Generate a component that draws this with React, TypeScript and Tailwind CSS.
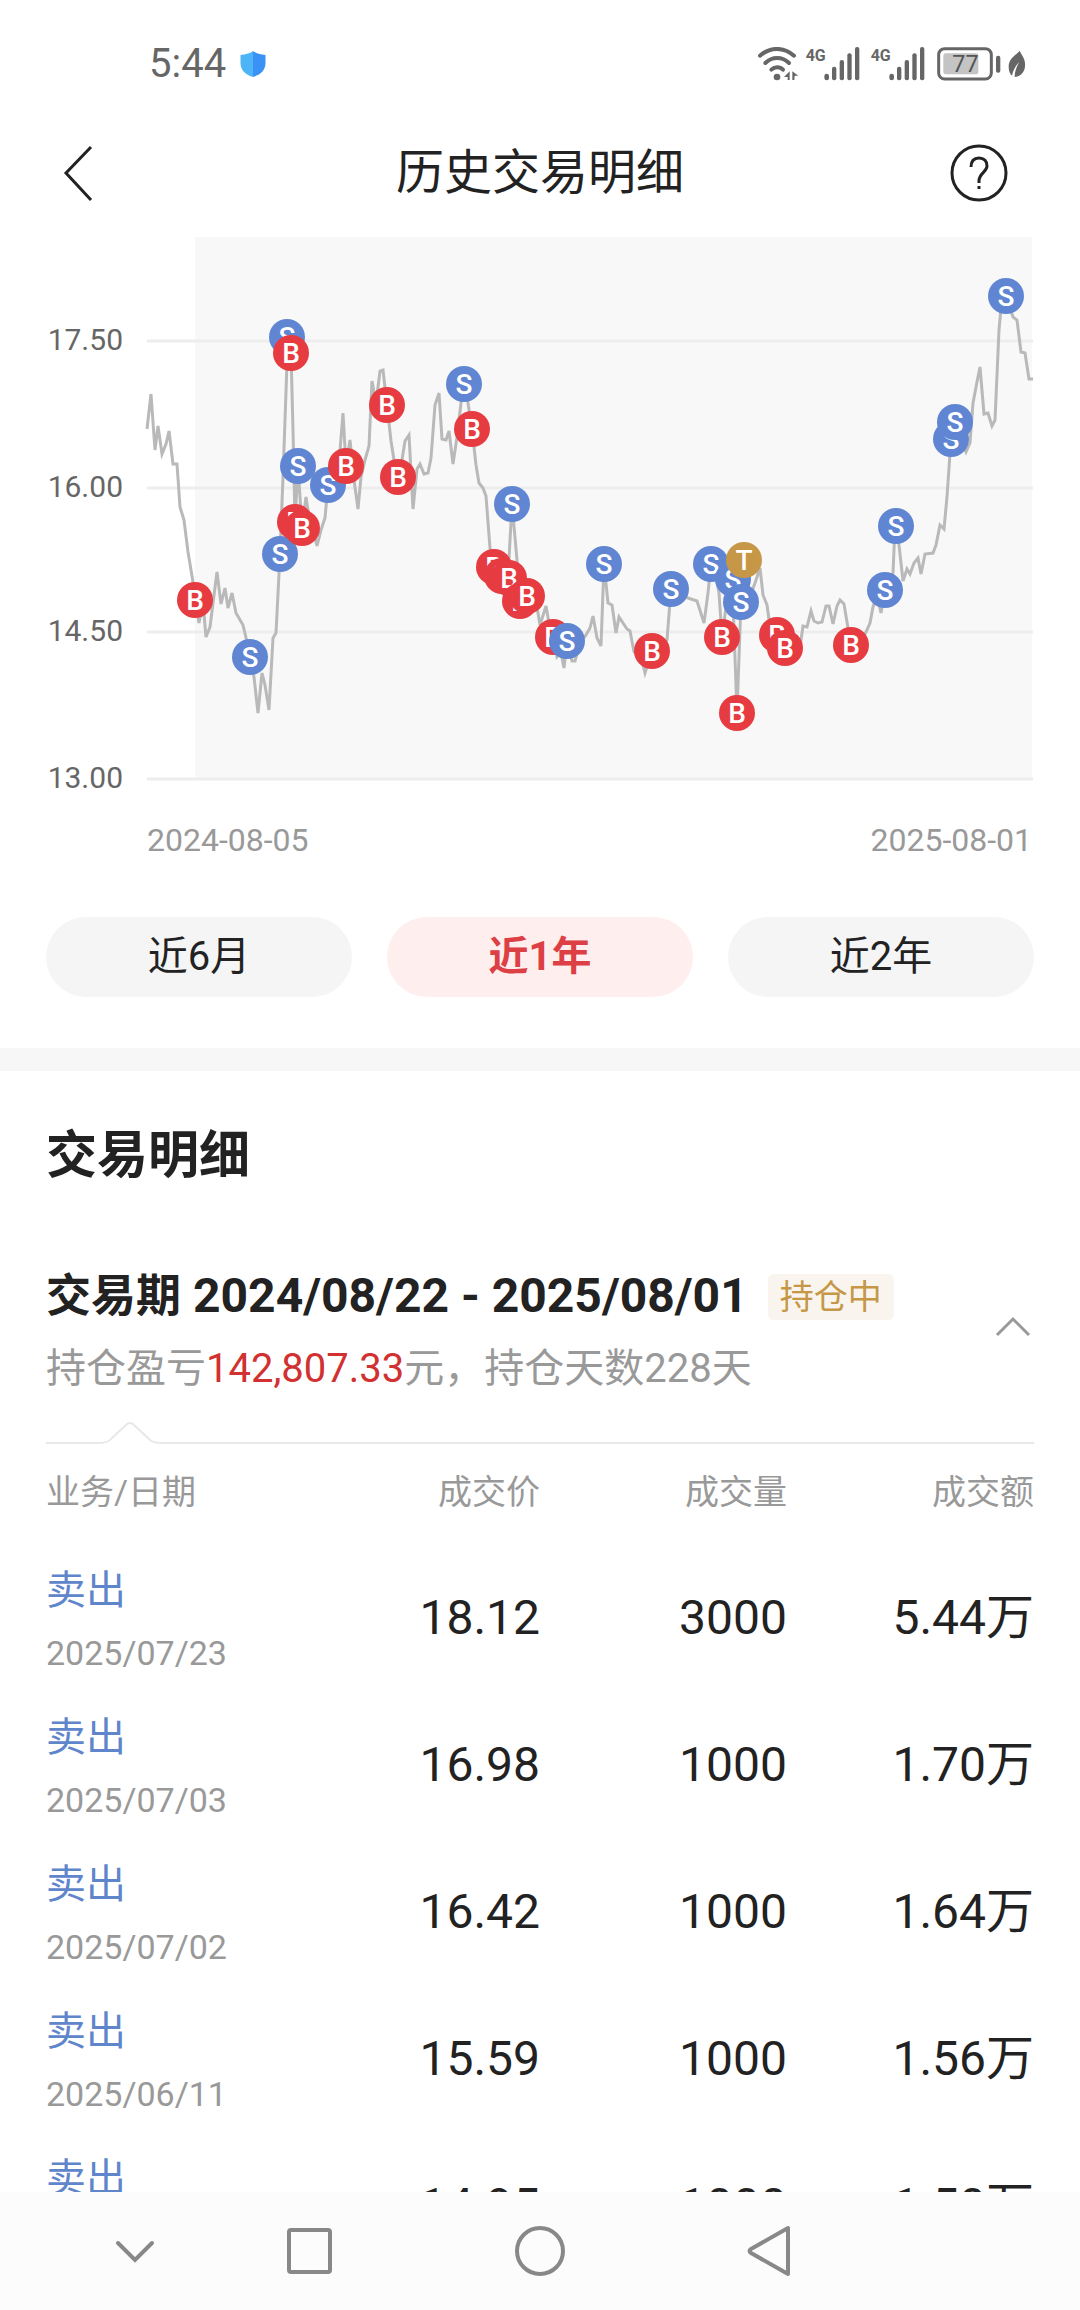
import { useState } from "react";

type MarkerType = "B" | "S" | "T";

interface Trade {
  date: string;
  side: string;
  price: string;
  volume: string;
  amount: string;
}

const trades: Trade[] = [
  { date: "2025/07/23", side: "卖出", price: "18.12", volume: "3000", amount: "5.44万" },
  { date: "2025/07/03", side: "卖出", price: "16.98", volume: "1000", amount: "1.70万" },
  { date: "2025/07/02", side: "卖出", price: "16.42", volume: "1000", amount: "1.64万" },
  { date: "2025/06/11", side: "卖出", price: "15.59", volume: "1000", amount: "1.56万" },
  { date: "2025/06/09", side: "卖出", price: "14.95", volume: "1000", amount: "1.50万" },
];

const ranges = ["近6月", "近1年", "近2年"];

const gridLines = [
  { label: "17.50", y: 111 },
  { label: "16.00", y: 258 },
  { label: "14.50", y: 402 },
  { label: "13.00", y: 549 },
];

const pricePoints = `147,199 151,164 155,220 158,196 162,224 166,214 169,201 173,234 177,234 180,277
184,290 188,322 193,352 195,370 199,393 203,373 206,407 210,397 213,373 217,342 221,374 225,358
228,378 232,363 236,383 243,395 247,412 250,427 254,447 258,483 262,443 265,455 269,480 273,408
276,403 280,324 283,247 287,133 288,107 291,123 293,200 295,292 298,236 302,298 306,267 309,287
313,300 317,316 321,300 325,288 328,255 335,248 339,233 343,183 346,236 350,210 354,250 358,279
361,247 365,230 369,216 372,151 376,173 380,141 383,140 387,175 391,211 394,230 398,247 402,230
405,211 409,205 413,279 417,239 420,234 424,244 428,243 431,228 435,175 439,163 442,209 446,210
449,201 453,234 457,207 461,173 464,154 468,173 472,199 476,235 479,253 483,258 486,266 490,318
494,337 502,345 508,347 512,274 517,330 520,371 527,366 537,377 540,395 546,376 549,393 553,407
557,427 561,423 564,438 567,411 572,431 575,431 580,413 586,405 590,398 593,386 597,408 601,416
604,334 608,373 612,375 616,403 619,387 627,399 630,401 634,422 641,427 645,443 652,421 667,410
671,359 688,368 697,371 704,393 708,363 711,334 715,340 719,363 722,407 726,377 730,347 733,372
737,483 741,372 744,330 750,367 755,353 760,338 763,365 767,375 770,397 777,405 785,418 800,417
803,396 807,397 811,381 814,391 818,393 822,392 826,376 829,376 833,394 837,376 840,370 844,374
848,398 851,415 860,413 866,402 870,393 873,377 877,365 881,383 885,360 893,343 895,296 899,315
903,351 907,339 910,344 914,333 918,328 921,344 925,324 933,323 936,315 940,295 944,299 947,267
951,209 954,192 966,222 970,213 973,173 977,152 980,137 984,184 988,183 992,196 995,190 999,100
1002,67 1006,66 1013,87 1017,90 1021,122 1025,123 1029,149 1033,149`;

const markers: [MarkerType, number, number][] = [
  ["B", 195, 370],
  ["S", 250, 427],
  ["S", 280, 324],
  ["S", 287, 107],
  ["B", 291, 123],
  ["B", 295, 292],
  ["S", 298, 236],
  ["B", 302, 298],
  ["S", 328, 255],
  ["B", 346, 236],
  ["B", 387, 175],
  ["B", 398, 247],
  ["S", 464, 154],
  ["B", 472, 199],
  ["B", 494, 337],
  ["B", 502, 346],
  ["B", 509, 348],
  ["S", 512, 274],
  ["B", 520, 371],
  ["B", 527, 366],
  ["B", 553, 407],
  ["S", 567, 411],
  ["S", 604, 334],
  ["B", 652, 421],
  ["S", 671, 359],
  ["S", 711, 334],
  ["B", 722, 407],
  ["S", 733, 349],
  ["B", 737, 483],
  ["S", 741, 372],
  ["T", 744, 330],
  ["B", 777, 405],
  ["B", 785, 418],
  ["B", 851, 415],
  ["S", 885, 360],
  ["S", 896, 296],
  ["S", 951, 209],
  ["S", 955, 192],
  ["S", 1006, 66],
];

const markerColors: Record<MarkerType, string> = {
  B: "#e63c41",
  S: "#6086d3",
  T: "#c59746",
};

const SignalBars = ({ x }: { x: number }) => (
  <g>
    <rect x={x} y="124" width="14" height="20" rx="7" />
    <rect x={x + 23} y="103" width="13" height="41" rx="6" />
    <rect x={x + 46} y="83" width="13" height="61" rx="6" />
    <rect x={x + 69} y="63" width="13" height="81" rx="6" />
    <rect x={x + 92} y="44" width="13" height="100" rx="6" />
  </g>
);

const StatusBar = () => (
  <div className="flex h-32 items-center justify-between pl-[149px] pr-[53px]">
    <div className="flex items-center gap-3.5">
      <span className="text-[40px] leading-none text-[#666]">5:44</span>
      <svg width="26" height="26" viewBox="0 0 26 26" aria-hidden="true">
        <path d="M13 0C10 2.600 5 3.500 0.500 4V12C0.500 19 5 23.500 13 26Z" fill="#4eb4f8" />
        <path d="M13 0C16 2.600 21 3.500 25.500 4V12C25.500 19 21 23.500 13 26Z" fill="#3a92f6" />
      </svg>
    </div>
    <svg width="270" height="35" viewBox="50 44 810 105" fill="#666" aria-hidden="true">
      <g fill="none" stroke="#666" strokeWidth="12" strokeLinecap="round">
        <path d="M59 70C90 43 130 43 161 70" />
        <path d="M75 92C95 72 126 72 146 92" />
        <path d="M93 112C103 102 119 102 128 112" />
      </g>
      <circle cx="110" cy="134" r="10" />
      <path d="M148 117V143H142V134H131ZM156 117L174 130H163L162 143H156Z" />
      <text x="196" y="86" fontSize="48" fontWeight="700">4G</text>
      <SignalBars x={252} />
      <text x="391" y="86" fontSize="48" fontWeight="700">4G</text>
      <SignalBars x={447} />
      <rect x="595" y="49" width="158" height="91" rx="18" fill="none" stroke="#666" strokeWidth="9" />
      <rect x="609" y="63" width="105" height="63" rx="7" fill="#c4c4c4" />
      <text x="636" y="120" fontSize="70" fill="#555">77</text>
      <rect x="767" y="70" width="13" height="51" rx="6" />
      <path d="M838 55C826 70 805 78 805 103C805 115 808 124 815 130C818 114 826 100 836 90C828 105 823 119 823 134C846 132 856 113 854 92C853 76 842 66 838 55Z" />
    </svg>
  </div>
);

const PriceChart = () => (
  <svg viewBox="0 0 1080 647" className="mt-3 w-full" role="img" aria-label="历史交易走势">
    <rect x="195" y="7" width="837" height="541" fill="#f8f8f8" />
    {gridLines.map((line) => (
      <g key={line.label}>
        <line x1="147" x2="1033" y1={line.y} y2={line.y} stroke="#ededed" strokeWidth="3" />
        <text x="123" y={line.y + 9} textAnchor="end" fontSize="30" fill="#666">
          {line.label}
        </text>
      </g>
    ))}
    <polyline points={pricePoints} fill="none" stroke="#b9b9b9" strokeWidth="3" />
    {markers.map(([type, x, y]) => (
      <g key={`${x}-${y}`}>
        <circle cx={x} cy={y} r="18" fill={markerColors[type]} />
        <text
          x={x}
          y={y + 10}
          textAnchor="middle"
          fontSize="28"
          fontWeight="500"
          fill="#fff"
        >
          {type}
        </text>
      </g>
    ))}
    <text x="147" y="621" fontSize="32" fill="#999">
      2024-08-05
    </text>
    <text x="1032" y="621" textAnchor="end" fontSize="32" fill="#999">
      2025-08-01
    </text>
  </svg>
);

const TradeTable = () => (
  <table className="w-full table-fixed">
    <thead>
      <tr className="h-24 text-[34px] text-[#999]">
        <th className="text-left font-normal">业务/日期</th>
        <th className="text-right font-normal">成交价</th>
        <th className="text-right font-normal">成交量</th>
        <th className="text-right font-normal">成交额</th>
      </tr>
    </thead>
    <tbody>
      {trades.map((trade) => (
        <tr key={trade.date} className="h-[147px] text-[48px] leading-[62px]">
          <td className="pt-4">
            <div className="text-[40px] leading-[62px] text-[#5f86cb]">{trade.side}</div>
            <div className="text-[34px] leading-[62px] text-[#999]">{trade.date}</div>
          </td>
          <td className="pt-2 text-right">{trade.price}</td>
          <td className="pt-2 text-right">{trade.volume}</td>
          <td className="pt-2 text-right">{trade.amount}</td>
        </tr>
      ))}
    </tbody>
  </table>
);

const NavBar = () => (
  <nav className="flex h-[118px] shrink-0 items-center bg-[#fcfcfc] pl-[106px]">
    <button aria-label="收起" className="mr-[115px]">
      <svg width="58" height="58" viewBox="0 0 58 58" fill="none" stroke="#888" strokeWidth="4">
        <path d="M12 21L29 38L46 21" strokeLinecap="round" />
      </svg>
    </button>
    <button aria-label="最近任务" className="mr-[174px]">
      <svg width="58" height="58" viewBox="0 0 58 58" fill="none" stroke="#888" strokeWidth="4">
        <rect x="10" y="8" width="41" height="42" rx="2" />
      </svg>
    </button>
    <button aria-label="主页" className="mr-[171px]">
      <svg width="58" height="58" viewBox="0 0 58 58" fill="none" stroke="#888" strokeWidth="4">
        <circle cx="29" cy="29" r="23" />
      </svg>
    </button>
    <button aria-label="返回">
      <svg width="58" height="58" viewBox="0 0 58 58" fill="none" stroke="#888" strokeWidth="4">
        <path d="M48 6V52L11 31Q8 29 11 27Z" strokeLinejoin="round" />
      </svg>
    </button>
  </nav>
);

export default function App() {
  const [range, setRange] = useState("近1年");
  const [expanded, setExpanded] = useState(true);

  return (
    <div
      lang="zh-CN"
      className="flex h-screen flex-col bg-white font-[Roboto,'Noto_Sans_CJK_SC',sans-serif] text-[#222]"
    >
      <main className="min-h-0 flex-1 overflow-hidden">
        <StatusBar />

        <header className="flex h-[90px] items-center justify-between px-[50px]">
          <button aria-label="返回" className="w-20">
            <svg width="58" height="58" viewBox="0 0 58 58" fill="none" stroke="#222" strokeWidth="3">
              <path d="M41 3L16 29L41 56" />
            </svg>
          </button>
          <h1 className="text-[48px] leading-none">历史交易明细</h1>
          <button aria-label="帮助" className="w-20">
            <svg width="58" height="58" viewBox="0 0 58 58" fill="none" stroke="#222" strokeWidth="3">
              <circle cx="29" cy="29" r="27" />
              <path d="M21 23C21 17 24 14 29 14S37 17 37 22C37 28 29 29 29 37V39" />
              <path d="M29 42V45" />
            </svg>
          </button>
        </header>

        <PriceChart />

        <div className="mt-10 grid grid-cols-3 gap-[35px] px-[46px]">
          {ranges.map((item) => (
            <button
              key={item}
              onClick={() => setRange(item)}
              className={`h-20 rounded-full text-[40px] ${
                item === range ? "bg-[#ffeeee] font-bold text-[#dd4044]" : "bg-[#f5f5f5]"
              }`}
            >
              {item}
            </button>
          ))}
        </div>

        <div className="mt-[51px] h-[23px] bg-[#f7f7f7]" />

        <section className="px-[46px] pt-[49px]">
          <h2 className="text-[51px] leading-[72px] font-bold">交易明细</h2>

          <div className="mt-[68px] flex items-center justify-between">
            <div>
              <div className="flex items-center gap-5">
                <h3 className="flex items-baseline gap-3 text-[45px] leading-[72px] font-bold">
                  交易期
                  <span className="text-[48px]">2024/08/22 - 2025/08/01</span>
                </h3>
                <span className="rounded-md bg-[#f9f5ee] px-3 text-[34px] leading-[46px] text-[#c59746]">
                  持仓中
                </span>
              </div>
              <p className="text-[40px] leading-[72px] text-[#999]">
                持仓盈亏<span className="text-[#d13131]">142,807.33</span>元，持仓天数228天
              </p>
            </div>
            <button
              aria-label="展开或收起"
              aria-expanded={expanded}
              onClick={() => setExpanded(!expanded)}
              className="pb-3"
            >
              <svg width="44" height="44" viewBox="0 0 44 44" fill="none" stroke="#999" strokeWidth="3">
                <path d="M7 30L23 14L39 30" />
              </svg>
            </button>
          </div>

          <div className="mt-3.5 flex items-end">
            <div className="w-[54px] border-b-2 border-[#e8e8e8]" />
            <svg width="60" height="25" viewBox="0 0 60 25" fill="none" stroke="#e8e8e8" strokeWidth="2">
              <path d="M0 24Q8 24 12 19L26 6Q30 2 34 6L48 19Q52 24 60 24" />
            </svg>
            <div className="flex-1 border-b-2 border-[#e8e8e8]" />
          </div>

          {expanded && <TradeTable />}
        </section>
      </main>
      <NavBar />
    </div>
  );
}
